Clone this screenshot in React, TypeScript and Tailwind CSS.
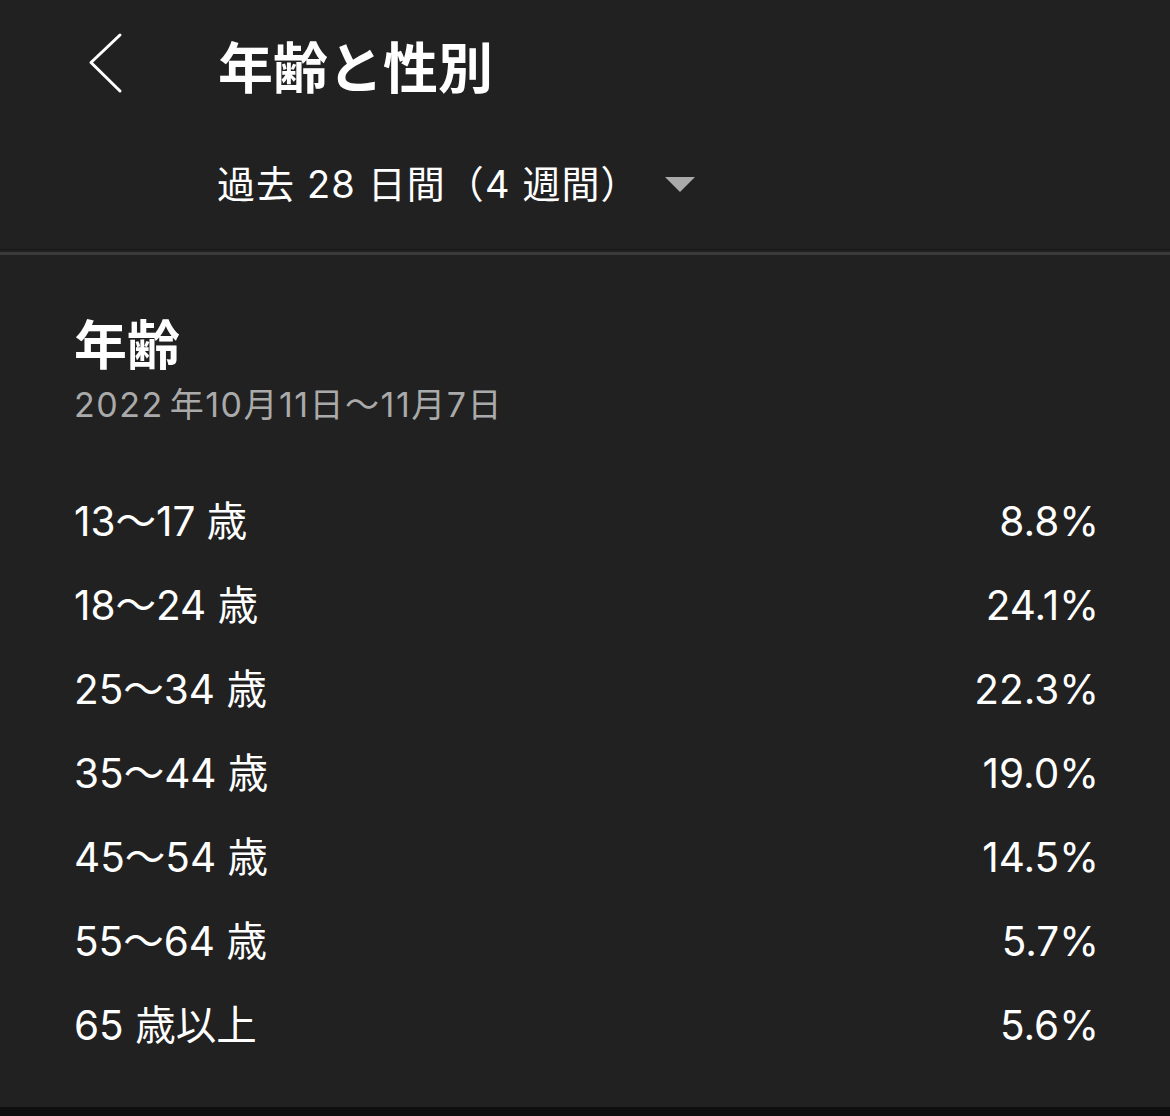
const rows = [
  { label: '13～17 歳', value: '8.8%' },
  { label: '18～24 歳', value: '24.1%' },
  { label: '25～34 歳', value: '22.3%' },
  { label: '35～44 歳', value: '19.0%' },
  { label: '45～54 歳', value: '14.5%' },
  { label: '55～64 歳', value: '5.7%' },
  { label: '65 歳以上', value: '5.6%' },
];

const font = "font-['Inter','Noto_Sans_CJK_JP',sans-serif]";

export default function App() {
  return (
    <div className={`flex min-h-[1116px] w-[1170px] flex-col bg-[#212121] text-white ${font}`}>
      <header className="flex h-[128px] items-center">
        <button type="button" className="ml-[84px] flex h-[70px] w-[46px] items-center justify-start">
          <svg width="40" height="64" viewBox="0 0 40 64" fill="none">
            <polyline points="36,3 7,30.5 36,59" stroke="#fff" strokeWidth="3" strokeLinecap="round" strokeLinejoin="round" />
          </svg>
        </button>
        <h1 className="ml-[88px] font-['Noto_Sans_CJK_JP',sans-serif] text-[55px] font-bold leading-[64px]">年齢と性別</h1>
      </header>

      <div className="flex h-[112px] items-center pl-[217px]">
        <span className="text-[38px] leading-[44px] tracking-[1.1px]">過去 28 日間（4 週間）</span>
        <svg className="ml-[25px]" width="30" height="15" viewBox="0 0 30 15">
          <polygon points="0,0 30,0 15,15" fill="#aaaaaa" />
        </svg>
      </div>

      <div className="mt-[9px] h-px bg-[#181818]" />
      <div className="mt-[2px] h-[3px] bg-[#3a3a3a]" />

      <section className="flex flex-1 flex-col pl-[74px] pr-[71px] pt-[57px] pb-[39px]">
        <h2 className="font-['Noto_Sans_CJK_JP',sans-serif] text-[53px] font-bold leading-[60px]">年齢</h2>
        <p className="mt-[11px] text-[34px] leading-[44px] tracking-[1.5px] text-[#aaaaaa]">
          2022<span className="ml-[6px]">年10月11日～11月7日</span>
        </p>

        <ul className="mt-[53px] flex flex-col">
          {rows.map((row) => (
            <li key={row.label} className="flex h-[84px] items-center justify-between text-[40.5px] leading-[48px]">
              <span>{row.label}</span>
              <span>{row.value}</span>
            </li>
          ))}
        </ul>
      </section>

      <div className="h-[9px] bg-[#0f0f0f]" />
    </div>
  );
}
